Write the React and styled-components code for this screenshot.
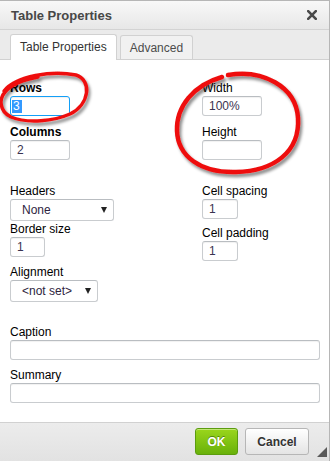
import React from "react";
import styled, { createGlobalStyle } from "styled-components";

const GlobalStyle = createGlobalStyle`
  html, body {
    margin: 0;
    padding: 0;
    background: #fff;
  }
  * {
    box-sizing: border-box;
  }
`;

const Dialog = styled.div`
  position: relative;
  width: 330px;
  height: 461px;
  display: flex;
  flex-direction: column;
  background: #fff;
  border-top: 1px solid #b6b6b6;
  border-right: 1px solid #b6b6b6;
  font-family: "Liberation Sans", Arial, sans-serif;
  overflow: hidden;
`;

const TitleBar = styled.div`
  height: 29px;
  flex: none;
  display: flex;
  align-items: center;
  justify-content: space-between;
  padding: 0 11px 0 11px;
  background: linear-gradient(#f8f8f8, #e7e7e7);
  border-bottom: 1px solid #d3d3d3;
  color: #474747;
  font-size: 13px;
  font-weight: bold;
`;

const Close = styled.svg`
  width: 10px;
  height: 10px;
  margin-right: 1px;
`;

const TabStrip = styled.div`
  height: 30px;
  flex: none;
  display: flex;
  align-items: flex-end;
  gap: 3px;
  padding-left: 10px;
  background: #ebebeb;
  border-bottom: 1px solid #d1d1d1;
`;

const Tab = styled.div`
  height: ${(p) => (p.$active ? "26px" : "24px")};
  margin-bottom: ${(p) => (p.$active ? "-1px" : "0")};
  padding: 0 9px 0 9px;
  display: flex;
  align-items: ${(p) => (p.$active ? "flex-start" : "center")};
  padding-top: ${(p) => (p.$active ? "5px" : "0")};
  border: 1px solid #d1d1d1;
  border-bottom: ${(p) => (p.$active ? "none" : "0")};
  border-radius: 3px 3px 0 0;
  background: ${(p) => (p.$active ? "#fff" : "#f1f1f1")};
  color: ${(p) => (p.$active ? "#333" : "#4c4c4c")};
  font-size: 12px;
  line-height: 14px;
`;

const Body = styled.div`
  flex: 1;
  padding: 20px 10px 0 10px;
  background: #fff;
`;

const Columns = styled.div`
  display: flex;
`;

const Column = styled.div`
  width: ${(p) => p.$width || "auto"};
  display: flex;
  flex-direction: column;
`;

const Field = styled.div`
  display: flex;
  flex-direction: column;
  align-items: flex-start;
  margin-top: ${(p) => p.$gap || 0}px;
`;

const Label = styled.label`
  display: block;
  font-size: 12px;
  line-height: 16px;
  color: #000;
  font-weight: ${(p) => (p.$bold ? "bold" : "normal")};
`;

const TextBox = styled.div`
  width: ${(p) => p.$width}px;
  height: 20px;
  padding: 0 ${(p) => (p.$focused ? 1 : 6)}px;
  border: 1px solid ${(p) => (p.$focused ? "#139ff7" : "#c9cccf")};
  border-top-color: ${(p) => (p.$focused ? "#139ff7" : "#b9bdc1")};
  border-radius: 3px;
  box-shadow: inset 0 1px 1px rgba(0, 0, 0, 0.06);
  background: #fff;
  font-size: 12px;
  line-height: 18px;
  color: #3a3350;
`;

const Selected = styled.span`
  display: inline-block;
  margin-top: 2px;
  padding: 0 2px 0 1px;
  line-height: 13px;
  background: #3399ff;
  color: #fff;
`;

const Select = styled.div`
  width: ${(p) => p.$width}px;
  height: 22px;
  display: flex;
  align-items: center;
  justify-content: space-between;
  padding: 0 6px 0 11px;
  border: 1px solid #c9cccf;
  border-top-color: #b9bdc1;
  border-radius: 3px;
  background: #fff;
  font-size: 12px;
  color: #2e2440;

  &::after {
    content: "";
    width: 0;
    height: 0;
    border-left: 3.5px solid transparent;
    border-right: 3.5px solid transparent;
    border-top: 6px solid #222;
  }
`;

const Footer = styled.div`
  position: relative;
  height: 39px;
  flex: none;
  display: flex;
  justify-content: flex-end;
  align-items: flex-start;
  gap: 7px;
  padding: 5px 20px 0 0;
  border-top: 1px solid #d1d1d1;
  background: linear-gradient(#ececec, #e2e2e2);
`;

const Button = styled.div`
  width: ${(p) => p.$width}px;
  height: 27px;
  display: flex;
  align-items: center;
  justify-content: center;
  border-radius: 3px;
  font-size: 12px;
  font-weight: bold;
  border: 1px solid ${(p) => (p.$primary ? "#5b9c0e" : "#b6b6b6")};
  background: ${(p) =>
    p.$primary
      ? "linear-gradient(#9ad61c, #69b10b)"
      : "linear-gradient(#ffffff, #e4e4e4)"};
  color: ${(p) => (p.$primary ? "#fff" : "#333")};
  text-shadow: ${(p) =>
    p.$primary ? "0 -1px 0 #55830c" : "0 1px 0 rgba(255,255,255,0.6)"};
  box-shadow: inset 0 1px 0 rgba(255, 255, 255, 0.4);
`;

const Grip = styled.div`
  position: absolute;
  right: 2px;
  bottom: 4px;
  width: 0;
  height: 0;
  border-left: 10px solid transparent;
  border-bottom: 10px solid #5a5a5a;
`;

const Marks = styled.svg`
  position: absolute;
  top: -1px;
  left: 0;
  width: 330px;
  height: 461px;
  pointer-events: none;
`;

const App = () => {
  return (
    <>
      <GlobalStyle />
      <Dialog>
        <TitleBar>
          <span>Table Properties</span>
          <Close viewBox="0 0 10 10">
            <path
              d="M1.2 1.2 L8.8 8.8 M8.8 1.2 L1.2 8.8"
              stroke="#4a4a4a"
              strokeWidth="2.6"
              strokeLinecap="square"
            />
          </Close>
        </TitleBar>
        <TabStrip>
          <Tab $active>Table Properties</Tab>
          <Tab>Advanced</Tab>
        </TabStrip>
        <Body>
          <Columns>
            <Column $width="192px">
              <Field>
                <Label $bold>Rows</Label>
                <TextBox $width={60} $focused>
                  <Selected>3</Selected>
                </TextBox>
              </Field>
              <Field $gap={8}>
                <Label $bold>Columns</Label>
                <TextBox $width={60}>2</TextBox>
              </Field>
              <Field $gap={23}>
                <Label>Headers</Label>
                <Select $width={104}>None</Select>
              </Field>
              <Field>
                <Label>Border size</Label>
                <TextBox $width={35}>1</TextBox>
              </Field>
              <Field $gap={7}>
                <Label>Alignment</Label>
                <Select $width={88}>&lt;not set&gt;</Select>
              </Field>
            </Column>
            <Column>
              <Field>
                <Label>Width</Label>
                <TextBox $width={60}>100%</TextBox>
              </Field>
              <Field $gap={8}>
                <Label>Height</Label>
                <TextBox $width={60} />
              </Field>
              <Field $gap={23}>
                <Label>Cell spacing</Label>
                <TextBox $width={36}>1</TextBox>
              </Field>
              <Field $gap={6}>
                <Label>Cell padding</Label>
                <TextBox $width={36}>1</TextBox>
              </Field>
            </Column>
          </Columns>
          <Field $gap={22}>
            <Label>Caption</Label>
            <TextBox $width={310} />
          </Field>
          <Field $gap={7}>
            <Label>Summary</Label>
            <TextBox $width={310} />
          </Field>
        </Body>
        <Footer>
          <Button $primary $width={43}>OK</Button>
          <Button $width={64}>Cancel</Button>
          <Grip />
        </Footer>
        <Marks viewBox="0 0 330 461">
          <defs>
            <filter id="shade" x="-20%" y="-20%" width="140%" height="140%">
              <feDropShadow dx="2" dy="3" stdDeviation="1.6" floodColor="#000" floodOpacity="0.45" />
            </filter>
          </defs>
          <g fill="none" stroke="#ee1111" strokeLinecap="round" filter="url(#shade)">
            <path
              d="M4 91 C16 76, 52 70, 76 75 C92 80, 90 104, 70 114 C54 121, 28 124, 11 117 C-1 111, -1 99, 5 92 C11 85, 22 80, 38 77"
              strokeWidth="3.5"
            />
            <path
              d="M228 75 C262 69, 296 86, 298 118 C300 152, 274 171, 236 172 C200 173, 178 156, 177 131 C176 106, 194 85, 222 77"
              strokeWidth="4.5"
            />
          </g>
        </Marks>
      </Dialog>
    </>
  );
};

export default App;
